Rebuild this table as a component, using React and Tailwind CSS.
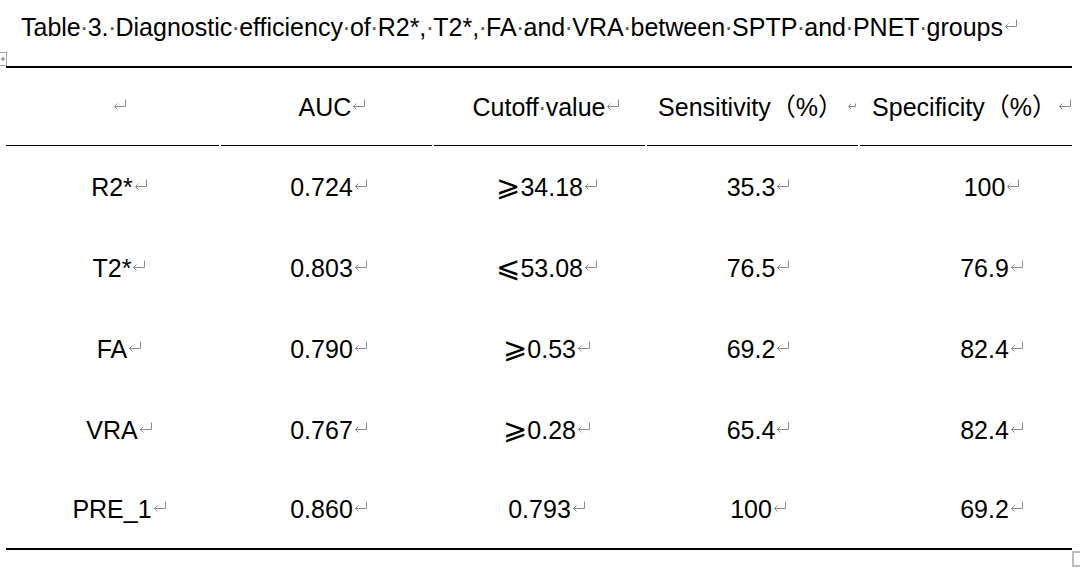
import React from 'react';

// Word paragraph mark (the little return arrow)
function Ret({ short = false }) {
  if (short) {
    return (
      <svg width="10" height="11" viewBox="0 0 10 11" className="inline-block align-[6px] ml-[4px]">
        <path d="M8.5 4.5V7.5H1.5M4 5L1.5 7.5L4 10" fill="none" stroke="#8c8c8c" strokeWidth="1" />
      </svg>
    );
  }
  return (
    <svg width="14" height="11" viewBox="0 0 14 11" className="inline-block align-[6px] ml-[1px]">
      <path d="M12.5 0.5V7.5H1.5M4.5 4.5L1.5 7.5L4.5 10.5" fill="none" stroke="#8c8c8c" strokeWidth="1" />
    </svg>
  );
}

// space shown as a middle dot
function Dot() {
  return <span className="inline-flex justify-center w-[0.278em] text-[#555]">·</span>;
}

function Spaced({ text }) {
  const words = text.split(' ');
  return (
    <>
      {words.map((w, i) => (
        <React.Fragment key={i}>
          {i > 0 && <Dot />}
          {w}
        </React.Fragment>
      ))}
    </>
  );
}

// cutoff values start with a slanted ⩾ / ⩽ sign, drawn a bit larger
function Value({ v }) {
  const sign = v[0] === '⩾' || v[0] === '⩽' ? v[0] : null;
  if (!sign) return <>{v}</>;
  return (
    <>
      <span className="text-[29px] leading-none font-['DejaVu_Sans',sans-serif]">{sign}</span>
      {v.slice(1)}
    </>
  );
}

const colW = ['w-[213px]', 'w-[211px]', 'w-[211px]', 'w-[211px]', 'w-[212px]'];
const headPad = ['pl-[14px]', 'pl-[12px]', 'pl-[14px]', 'pl-[10px]', 'pl-[12px]'];
const dataPad = ['pl-[14px]', 'pl-[5px]', 'pl-[15px]', 'pl-[12px]', 'pl-[52px]'];

const rows = [
  ['R2*', '0.724', '⩾34.18', '35.3', '100'],
  ['T2*', '0.803', '⩽53.08', '76.5', '76.9'],
  ['FA', '0.790', '⩾0.53', '69.2', '82.4'],
  ['VRA', '0.767', '⩾0.28', '65.4', '82.4'],
  ['PRE_1', '0.860', '0.793', '100', '69.2'],
];

const rowH = ['h-[81px]', 'h-[81px]', 'h-[81px]', 'h-[81px]', 'h-[78px]'];

export default function App() {
  return (
    <div className="relative w-[1080px] h-[568px] overflow-hidden bg-white text-black font-['Liberation_Sans','Noto_Sans_CJK_SC','DejaVu_Sans',sans-serif] text-[25px] leading-[32px]">
      {/* caption */}
      <p className="pl-[21px] pt-[11px] whitespace-nowrap">
        <Spaced text="Table 3. Diagnostic efficiency of R2*, T2*, FA and VRA between SPTP and PNET groups" />
        <Ret />
      </p>

      {/* table */}
      <div className="ml-[6px] mt-[23px] w-[1066px] border-t-2 border-black">
        <div className="flex gap-[2px] h-[78px]">
          <div className={`${colW[0]} ${headPad[0]} flex items-center justify-center border-b border-black`}>
            <span><Ret /></span>
          </div>
          <div className={`${colW[1]} ${headPad[1]} flex items-center justify-center border-b border-black`}>
            <span>AUC<Ret /></span>
          </div>
          <div className={`${colW[2]} ${headPad[2]} flex items-center justify-center border-b border-black whitespace-nowrap`}>
            <span><Spaced text="Cutoff value" /><Ret /></span>
          </div>
          <div className={`${colW[3]} ${headPad[3]} flex items-center justify-center border-b border-black whitespace-nowrap`}>
            <span>Sensitivity（%）<Ret short /></span>
          </div>
          <div className={`${colW[4]} ${headPad[4]} flex items-center justify-center border-b border-black whitespace-nowrap`}>
            <span>Specificity（%）<Ret /></span>
          </div>
        </div>

        <div className="border-b-2 border-black">
          {rows.map((r, i) => (
            <div key={i} className={`flex gap-[2px] ${rowH[i]}`}>
              {r.map((v, j) => (
                <div key={j} className={`${colW[j]} ${dataPad[j]} flex items-center justify-center whitespace-nowrap`}>
                  <span><Value v={v} /><Ret /></span>
                </div>
              ))}
            </div>
          ))}
        </div>
      </div>

      {/* table move handle, top-left */}
      <div className="absolute left-[-7px] top-[52px] w-[14px] h-[14px] border border-[#a6a6a6] bg-white flex items-center justify-center">
        <svg width="8" height="8" viewBox="0 0 8 8" className="ml-[6px]">
          <path d="M4 1V7M1 4H7" stroke="#555" strokeWidth="1" />
        </svg>
      </div>

      {/* table resize handle, bottom-right */}
      <div className="absolute left-[1072px] top-[551px] w-[16px] h-[16px] border-2 border-[#bdbdbd] bg-white" />
    </div>
  );
}
